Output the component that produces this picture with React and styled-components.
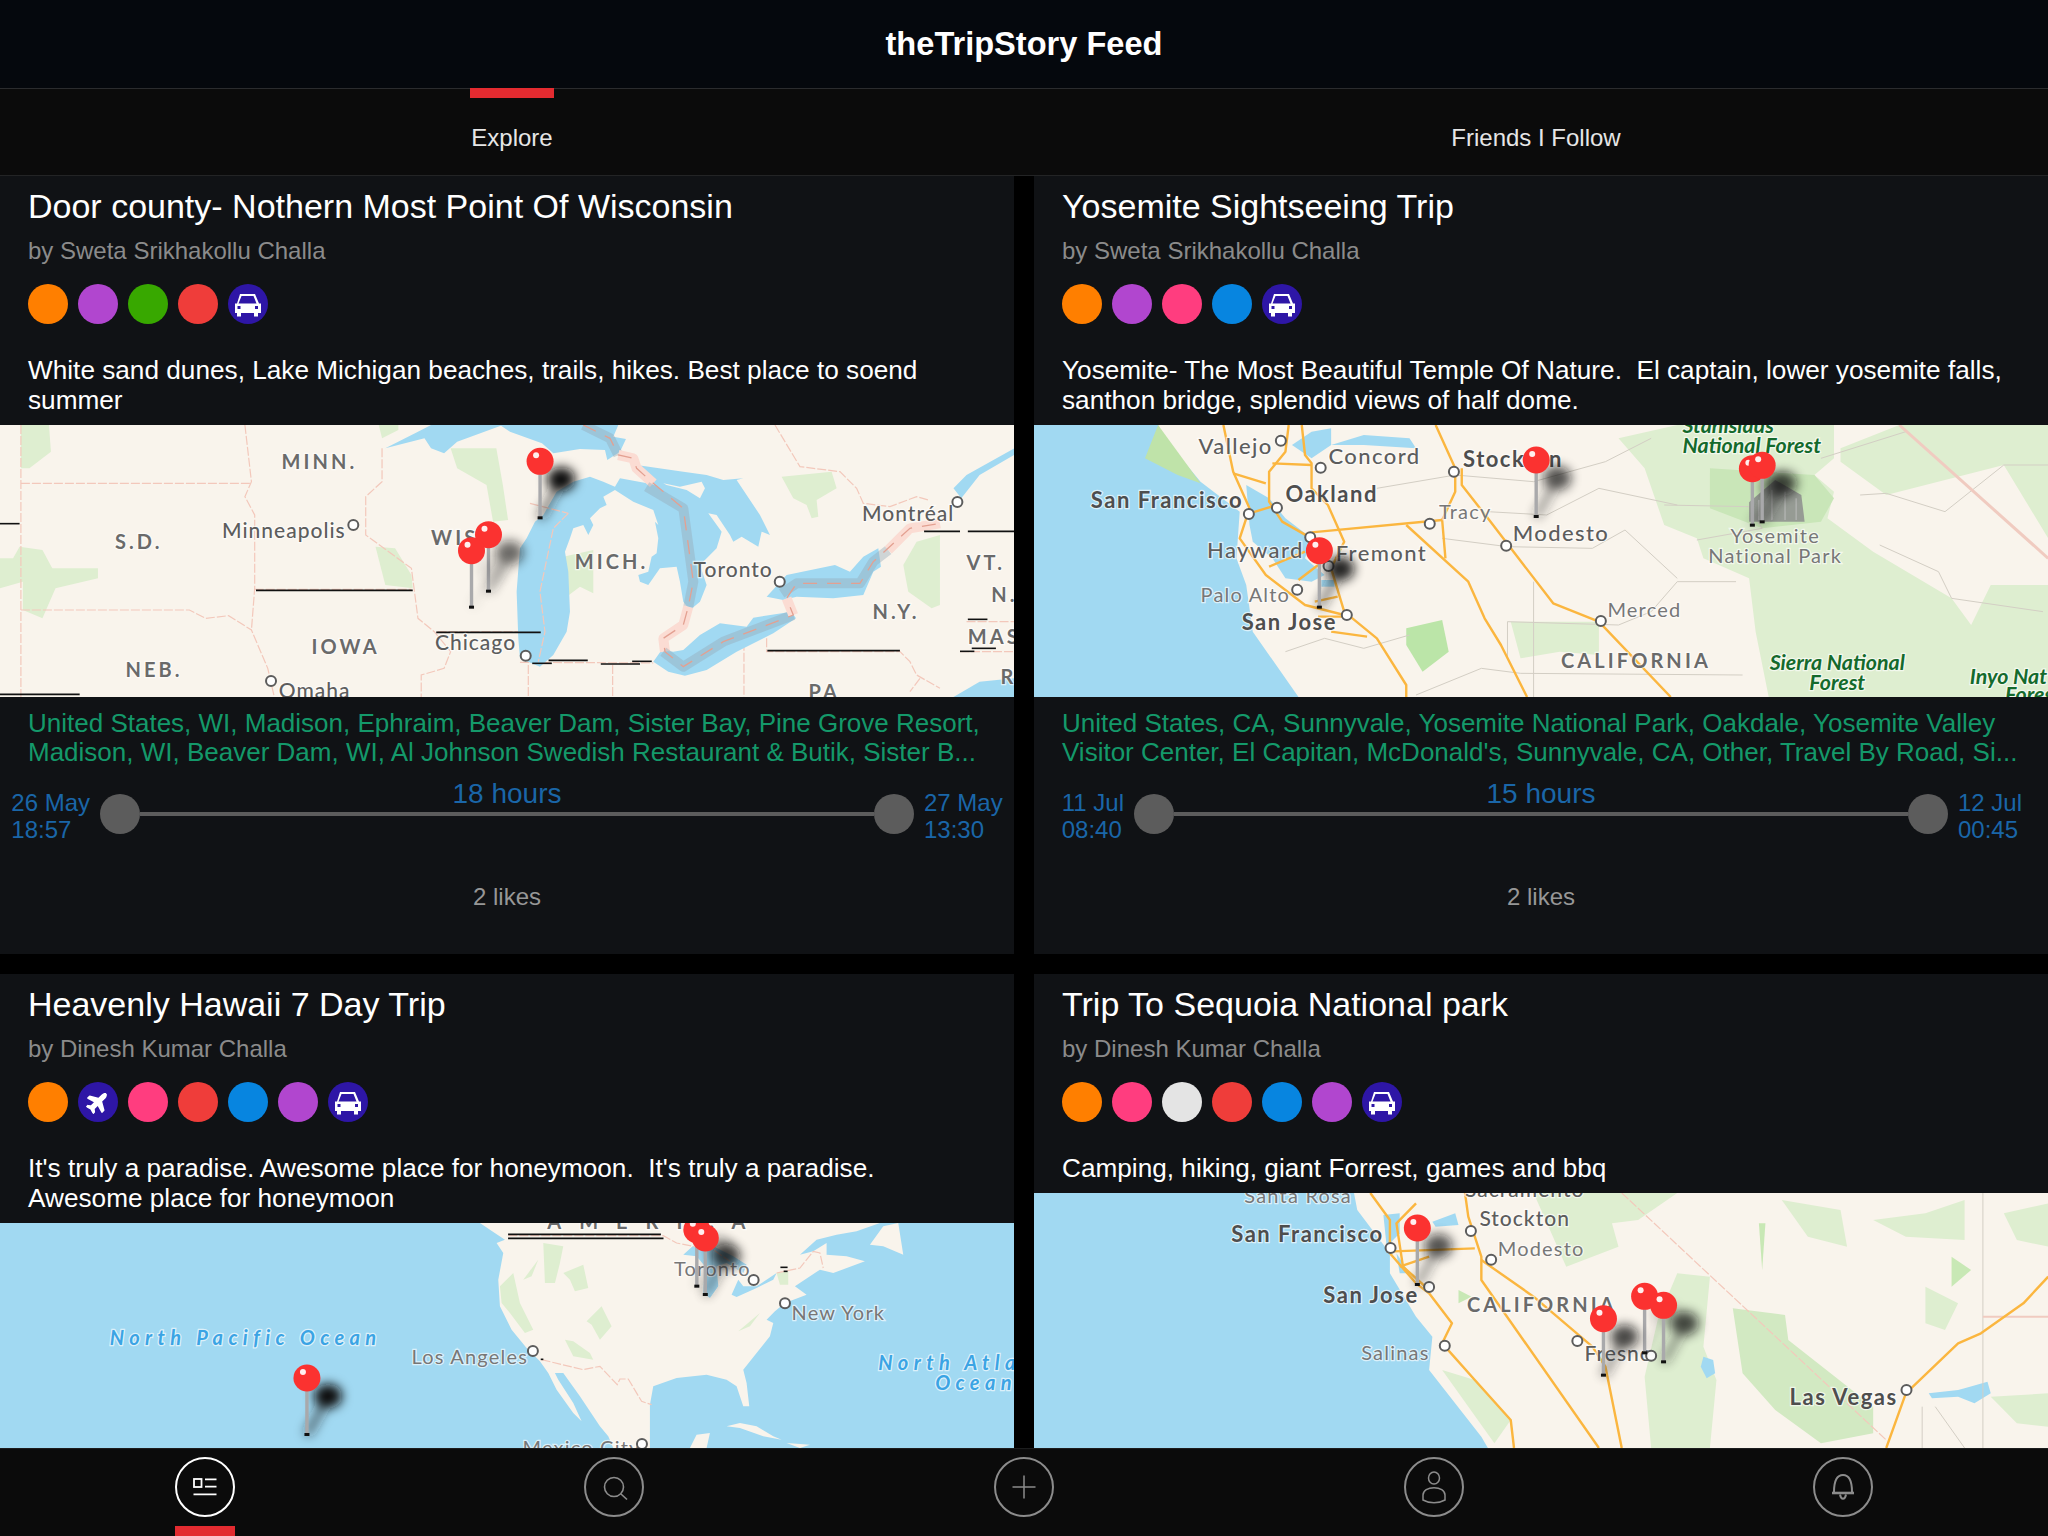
import React from "react";
import styled, { createGlobalStyle } from "styled-components";
import { FaPlane } from "react-icons/fa";

const GlobalStyle = createGlobalStyle`
  html, body { margin: 0; padding: 0; background: #000; }
  body { font-family: "Liberation Sans", Arial, sans-serif; }
`;

const Page = styled.div`
  width: 2048px;
  height: 1536px;
  display: flex;
  flex-direction: column;
  overflow: hidden;
  background: #000;
`;

const Header = styled.header`
  height: 88px;
  box-sizing: content-box;
  flex: none;
  display: flex;
  align-items: center;
  justify-content: center;
  background: #05080d;
  border-bottom: 1px solid #2b2c2e;
  color: #fff;
  font-size: 32.6px;
  font-weight: 700;
  line-height: 90px;
`;

const Tabs = styled.nav`
  height: 86px;
  flex: none;
  display: grid;
  grid-template-columns: 1fr 1fr;
  background: #0b0b0b;
  border-bottom: 1px solid #232425;
`;

const Tab = styled.div`
  position: relative;
  display: flex;
  align-items: center;
  justify-content: center;
  padding-top: 11px;
  color: #e6e6e6;
  font-size: 24px;
  ${(p) =>
    p.$active &&
    `&::before {
      content: "";
      position: absolute;
      top: -1px;
      left: 470px;
      width: 84px;
      height: 10px;
      background: #e32b30;
    }`}
`;

const Feed = styled.main`
  flex: none;
  display: grid;
  grid-template-columns: 1014px 1014px;
  grid-template-rows: 778px 474px;
  column-gap: 20px;
  row-gap: 20px;
`;

const Card = styled.article`
  display: flex;
  flex-direction: column;
  min-height: 0;
  background: #101215;
`;

const Title = styled.h2`
  margin: 10px 28px 0;
  color: #fff;
  font-size: 34px;
  font-weight: 400;
  line-height: 40px;
`;

const Author = styled.div`
  margin: 10px 28px 0;
  color: #8b8b8b;
  font-size: 24px;
  line-height: 30px;
`;

const Tags = styled.div`
  display: flex;
  gap: 10px;
  margin: 18px 28px 0;
`;

const Tag = styled.span`
  width: 40px;
  height: 40px;
  border-radius: 50%;
  display: flex;
  align-items: center;
  justify-content: center;
  color: #fff;
  background: ${(p) => p.$color};
`;

const Description = styled.p`
  margin: 31px 28px 10px;
  color: #fff;
  font-size: 26.2px;
  line-height: 30px;
  white-space: pre-wrap;
`;

const MapFrame = styled.div`
  flex: ${(p) => (p.$fill ? "1" : "none")};
  height: ${(p) => (p.$fill ? "auto" : "272px")};
  min-height: 0;
  overflow: hidden;
  background: #f9f4ec;
`;

const MapSvg = styled.svg`
  display: block;
  width: 100%;
  height: 100%;
`;

const Places = styled.p`
  margin: 12px 28px 0;
  color: #14996a;
  font-size: 26px;
  line-height: 29px;
`;

const Timeline = styled.div`
  display: flex;
  align-items: flex-start;
  margin-top: 13px;
`;

const DateSlot = styled.div`
  width: 90px;
  display: flex;
  justify-content: ${(p) => (p.$end ? "flex-end" : "flex-start")};
  margin-top: 9px;
  color: #1a66a8;
  font-size: 24px;
  line-height: 27px;
`;

const Stop = styled.span`
  width: 40px;
  height: 40px;
  flex: none;
  margin: 14px ${(p) => (p.$right ? "10px" : "0")} 0 ${(p) => (p.$right ? "0" : "10px")};
  border-radius: 50%;
  background: #5c5c5c;
`;

const Track = styled.div`
  flex: 1;
  display: flex;
  flex-direction: column;
  align-items: center;
`;

const Duration = styled.div`
  color: #1a66a8;
  font-size: 28px;
  line-height: 28px;
`;

const TrackLine = styled.div`
  width: 100%;
  height: 4px;
  margin-top: 4px;
  background: #5c5c5c;
`;

const Likes = styled.div`
  margin-top: 39px;
  text-align: center;
  color: #979797;
  font-size: 24px;
  line-height: 30px;
`;

const TabBar = styled.footer`
  height: 88px;
  flex: none;
  display: grid;
  grid-template-columns: repeat(5, 1fr);
  background: #0b0b0b;
  border-top: 1px solid #1c1d1e;
  box-sizing: border-box;
`;

const BarItem = styled.div`
  position: relative;
  display: flex;
  justify-content: center;
  padding-top: 8px;
  ${(p) =>
    p.$active &&
    `&::after {
      content: "";
      position: absolute;
      left: 50%;
      bottom: 0;
      width: 60px;
      height: 10px;
      margin-left: -30px;
      background: #e32b30;
    }`}
`;

const BarCircle = styled.svg`
  width: 60px;
  height: 60px;
  fill: none;
  stroke: ${(p) => (p.$active ? "#fff" : "#8c8c8c")};
`;

/* map drawing parts */
const Water = styled.polygon`
  fill: #a1d9f2;
`;
const Land = styled.polygon`
  fill: #f9f4ec;
`;
const Park = styled.polygon`
  fill: ${(p) => p.$color || "#deeed0"};
`;
const Road = styled.polyline`
  fill: none;
  stroke: #fbb63f;
  stroke-width: 2.4px;
  stroke-linejoin: round;
  vector-effect: non-scaling-stroke;
`;
const Minor = styled.polyline`
  fill: none;
  stroke: #d3cec4;
  stroke-width: 1px;
  vector-effect: non-scaling-stroke;
`;
const Boundary = styled.polyline`
  fill: none;
  stroke: #f3c8bb;
  stroke-width: 1.2px;
  stroke-dasharray: 9 2;
  vector-effect: non-scaling-stroke;
`;
const LakeBand = styled.polyline`
  fill: none;
  stroke: ${(p) => (p.$land ? "#fbdcd3" : "#97a9b8")};
  stroke-opacity: ${(p) => (p.$land ? 1 : 0.42)};
  stroke-width: 10px;
  stroke-linejoin: round;
  vector-effect: non-scaling-stroke;
`;
const BandDash = styled.polyline`
  fill: none;
  stroke: #e3a091;
  stroke-width: 1.3px;
  stroke-dasharray: 14 10;
  vector-effect: non-scaling-stroke;
`;
const Glitch = styled.line`
  stroke: #111;
  stroke-width: 1.6px;
  vector-effect: non-scaling-stroke;
`;
const labelStyles = {
  state: "font-size:20px;font-weight:700;letter-spacing:3.1px;fill:#6a6a6a;",
  region: "font-size:20px;font-weight:700;letter-spacing:18px;fill:#6a6a6a;",
  major: "font-size:22px;font-weight:700;letter-spacing:1.5px;fill:#4e4e4e;",
  large: "font-size:22px;font-weight:500;letter-spacing:1.4px;fill:#5d5d5d;",
  city: "font-size:21px;font-weight:500;letter-spacing:1px;fill:#5d5d5d;",
  minor: "font-size:20px;font-weight:400;letter-spacing:1.2px;fill:#777;",
  forest: "font-size:21.4px;font-weight:700;font-style:italic;fill:#146a2c;",
  ocean: "font-size:20px;font-weight:700;font-style:italic;letter-spacing:5.4px;fill:#3ba4e4;",
};
const Label = styled.text`
  font-family: Lato, "Liberation Sans", sans-serif;
  paint-order: stroke;
  stroke: rgba(255, 255, 255, 0.65);
  stroke-width: 2.5px;
  ${(p) => labelStyles[p.$kind]}
`;
const CityDot = styled.circle`
  fill: #fff;
  stroke: #5c5c5c;
  stroke-width: 2px;
`;
const Needle = styled.rect`
  fill: #a9a9ab;
`;
const PinHead = styled.circle`
  fill: #fb3230;
`;
const PinShine = styled.circle`
  fill: #fff;
  opacity: 0.92;
`;

const Car = () => (
  <svg width="40" height="40" viewBox="0 0 40 40" fill="currentColor">
    <path
      fillRule="evenodd"
      d="M12 10h15l4 9.5h2V29h-3v3.5h-4V29H13v3.5H9V29H7v-9.5h2zm1.5 2l-3 7.5h18l-3-7.5zM9.5 22v3h3v-3zm17.500 0v3h3v-3z"
    />
  </svg>
);

const Plane = () => <FaPlane size={24} style={{ transform: "rotate(-45deg)" }} />;

const Pin = ({ x, y, blur, strength = 0.9 }) => (
  <g>
    <g filter={`url(#${blur})`} opacity={strength}>
      <line x1={x} y1={y} x2={x + 20} y2={y - 36} stroke="#222" strokeWidth="8" opacity="0.6" />
      <ellipse cx={x + 21} cy={y - 39} rx="14" ry="12" fill="#111" />
    </g>
    <Needle x={x - 1.7} y={y - 46} width="3.4" height="45" />
    <rect x={x - 2.5} y={y - 2} width="5" height="3" fill="#111" />
    <PinHead cx={x} cy={y - 57} r="13.5" />
    <PinShine cx={x - 4} cy={y - 63} r="3" />
  </g>
);

/* Shapes and labels are traced in crop coordinates, sx/sy take them to map pixels */
const TraceMap = ({ id, fill, sx, sy, ox = 0, oy = 0, shapes, labels, dots, pins }) => {
  const tx = (x) => (x - ox) * sx;
  const ty = (y) => (y - oy) * sy;
  return (
    <MapFrame $fill={fill}>
      <MapSvg>
        <defs>
          <filter id={id} x="-100%" y="-100%" width="300%" height="300%">
            <feGaussianBlur stdDeviation="5.500" />
          </filter>
        </defs>
        <g transform={`scale(${sx} ${sy}) translate(${-ox} ${-oy})`}>{shapes}</g>
        {labels.map(([text, x, y, kind, anchor]) => (
          <Label key={text + x} x={tx(x)} y={ty(y)} $kind={kind} textAnchor={anchor || "start"}>
            {text}
          </Label>
        ))}
        {dots.map(([x, y]) => (
          <CityDot key={`${x}-${y}`} cx={tx(x)} cy={ty(y)} r={5} />
        ))}
        {pins.map(([x, y, strength]) => (
          <Pin key={`${x}-${y}`} x={tx(x)} y={ty(y)} blur={id} strength={strength} />
        ))}
      </MapSvg>
    </MapFrame>
  );
};

const SX = 1024 / 1568;
const SY = 1 / 3;

const lakesShapes = (
  <>
    <Park points="32,0 75,0 78,80 45,130 32,130" />
    <Park points="580,0 610,0 610,15 585,40" />
    <Park points="690,70 760,70 770,180 778,285 755,290 745,180 700,130" />
    <Park points="575,365 605,370 630,450 632,490 590,480" />
    <Park points="0,400 20,400 30,365 65,375 80,430 150,430 150,460 85,490 65,580 35,555 35,470 0,490" />
    <Boundary points="32,0 32,816" />
    <Boundary points="375,0 385,170 375,215 390,270 390,490 385,615" />
    <Boundary points="32,175 385,175" />
    <Boundary points="32,555 290,555 315,580 350,572 385,615 410,730 420,816" />
    <Boundary points="390,493 630,493" />
    <Boundary points="585,70 585,170 560,215 560,330 630,430 640,580 665,620 690,680 680,730 645,750 645,816" />
    <Boundary points="670,620 830,620" />
    <Boundary points="1480,590 1553,590" />
    <Boundary points="1470,680 1553,680" />
    <Water points="590,70 640,20 660,0 770,0 700,50 680,85 660,70 650,40" />
    <Water points="1460,190 1480,150 1553,70 1553,90 1500,150 1472,220" />
    <Water points="1460,816 1500,770 1553,760 1553,816" />
    {/* lakes region, traced from a true 3x crop starting at x=520 */}
    <g transform="translate(796.2 0) scale(0.5104 1)">
      <Park points="785,155 935,140 950,190 890,225 895,275 875,280 860,240 820,220" />
      <Park points="130,395 220,375 220,505 180,485 140,515" />
      <Park points="1260,330 1190,350 1150,420 1165,500 1235,550 1260,540" />
      <Boundary points="765,0 840,125 960,140 1010,190 1030,235 1110,245 1190,215 1225,225" />
      <Boundary points="740,640 740,680 1140,680 1170,710 1190,750 1260,790" />
      <Boundary points="672,650 672,816" />
      <Boundary points="278,720 278,816" />
      <Boundary points="25,720 25,816" />
      <Boundary points="1200,760 1170,800" />
      <Boundary points="0,712 400,714" />
      <Water points="-60,0 295,0 280,35 318,42 300,80 262,105 255,75 180,72 100,85 66,55 -30,20" />
      <Water points="35,715 60,725 100,690 140,620 150,560 145,440 135,380 150,340 160,310 190,300 205,330 220,300 210,280 240,250 260,240 250,215 285,195 340,230 400,255 415,300 405,290 415,340 410,385 395,395 385,440 355,450 360,470 385,480 420,430 470,425 480,470 490,530 510,555 540,530 560,480 540,420 590,370 605,320 565,265 590,270 630,330 640,350 665,335 715,365 725,320 750,330 720,270 680,210 650,165 670,160 610,165 560,150 490,140 350,120 335,100 350,130 370,165 410,180 300,160 285,185 250,170 210,155 160,170 110,200 70,270 45,290 20,340 0,370 -10,500 -5,640 0,700" />
      <Land points="430,175 480,185 545,170 555,190 540,220 500,195 440,180" />
      <Water points="400,710 425,675 460,680 490,675 540,630 600,595 680,605 700,578 815,560 828,580 760,625 650,680 560,735 495,752 445,740" />
      <Water points="740,515 800,450 945,420 990,440 1030,395 1075,370 1083,425 1060,440 1030,510 940,520 830,515 790,525" />
      <LakeBand points="190,0 270,40 295,90" />
      <LakeBand $land points="295,90 340,100 350,130 400,175" />
      <LakeBand points="380,185 490,250 520,470 505,545" />
      <LakeBand $land points="505,545 490,600 430,640 435,680" />
      <LakeBand points="430,680 490,725 610,650 820,570" />
      <LakeBand $land points="820,570 800,520" />
      <LakeBand points="785,505 830,475 1020,475 1060,410 1105,375" />
      <LakeBand $land points="1105,375 1170,310 1260,295" />
      <BandDash points="190,0 270,40 295,90 340,100 350,130 400,175 490,250 520,470 505,545 490,600 430,640 435,680 490,725 610,650 820,570 800,520 830,475 1020,475 1060,410 1170,310 1260,295" />
      <Boundary points="145,265 100,310 60,500 75,620 55,710" />
      <Boundary points="30,235 145,265" />
    </g>
    <Glitch x1="0" y1="296" x2="30" y2="296" />
    <Glitch x1="392" y1="496" x2="632" y2="496" />
    <Glitch x1="668" y1="622" x2="828" y2="622" />
    <Glitch x1="840" y1="706" x2="900" y2="706" />
    <Glitch x1="815" y1="715" x2="845" y2="715" />
    <Glitch x1="920" y1="717" x2="980" y2="717" />
    <Glitch x1="968" y1="709" x2="998" y2="709" />
    <Glitch x1="1175" y1="677" x2="1378" y2="677" />
    <Glitch x1="1415" y1="319" x2="1470" y2="319" />
    <Glitch x1="1482" y1="319" x2="1553" y2="319" />
    <Glitch x1="1482" y1="583" x2="1512" y2="583" />
    <Glitch x1="1488" y1="670" x2="1525" y2="670" />
    <Glitch x1="1470" y1="679" x2="1492" y2="679" />
    <Glitch x1="0" y1="808" x2="122" y2="808" />
  </>
);

const lakesLabels = [
  ["MINN.", 431, 133, "state"],
  ["S.D.", 176, 372, "state"],
  ["WIS", 660, 360, "state"],
  ["MICH.", 880, 432, "state"],
  ["IOWA", 477, 688, "state"],
  ["NEB.", 192, 756, "state"],
  ["N.Y.", 1336, 582, "state"],
  ["VT.", 1480, 436, "state"],
  ["N.", 1518, 530, "state"],
  ["MAS", 1482, 656, "state"],
  ["R", 1532, 778, "state"],
  ["PA", 1238, 822, "state"],
  ["Minneapolis", 340, 340, "city"],
  ["Montréal", 1320, 287, "city"],
  ["Toronto", 1062, 455, "city"],
  ["Chicago", 666, 676, "city"],
  ["Omaha", 427, 818, "city"],
];

const bayShapes = (
  <>
    <Park points="910,40 1000,0 1240,0 1240,100 1210,150 1240,200 1230,280 1300,380 1420,520 1450,600 1480,480 1568,480 1568,816 1140,816 1120,620 1110,460 1040,400 1030,340 980,300 950,130" />
    <Park $color="#c9e6b8" points="1050,130 1210,150 1240,220 1220,290 1130,310 1050,250" />
    <Park points="1250,70 1340,0 1568,0 1568,340 1500,120 1320,210 1250,110" />
    <Park points="745,590 880,590 880,690 820,680 760,700" />
    <Park $color="#bbe5a8" points="585,610 640,585 650,680 610,740 585,660" />
    <Water points="15,0 205,0 215,40 270,170 330,260 325,400 340,480 350,620 420,816 15,816" />
    <Park $color="#bfe3a9" points="205,0 270,175 235,150 185,100" />
    <Water points="340,180 375,220 400,280 440,340 430,400 460,450 440,470 400,460 380,400 350,350 345,300" />
    <Water points="410,60 440,20 470,10 470,60 440,100" />
    <Water points="470,60 520,30 590,40 600,70 520,60" />
    <Water points="455,465 475,465 475,485 455,485" />
    <Minor points="540,190 660,150 780,170 890,110 960,40" />
    <Minor points="640,340 740,365 870,370 920,315 1000,460" />
    <Minor points="710,260 800,270 880,190 1000,240" />
    <Minor points="600,810 700,730 760,745 1100,750" />
    <Minor points="400,680 460,640 520,670 590,630" />
    <Minor points="980,240 1110,245 1130,310 1030,345" />
    <Minor points="1280,210 1320,205 1410,260 1500,120 1568,120" />
    <Minor points="1310,360 1400,440 1420,520 1560,560" />
    <Minor points="1220,100 1350,20" />
    <Minor points="1090,470 1000,470 960,560 910,600 740,590 740,700" />
    <Minor points="780,470 780,816" />
    <polyline points="1340,0 1568,400" fill="none" stroke="#f0cbc0" strokeWidth="3" vectorEffect="non-scaling-stroke" />
    <Road points="305,0 320,140 345,250 330,340 370,450 430,540 490,570" />
    <Road points="405,0 400,80 375,140 375,230 395,290 440,340 470,430 490,560 540,640 585,780 585,816" />
    <Road points="425,0 430,90 440,115 440,190 465,240 490,350 470,430" />
    <Road points="320,145 370,175" />
    <Road points="345,265 387,240" />
    <Road points="440,322 640,285" />
    <Road points="585,300 680,470 705,580 730,660 770,816" />
    <Road points="630,0 660,130 660,200 640,285 645,400" />
    <Road points="670,130 670,180 710,280 810,535 880,590 990,816" />
    <Road points="375,425 430,380" />
    <Road points="420,465 450,420" />
    <Road points="445,530 480,515" />
    <Road points="450,575 500,575" />
    <Road points="470,620 525,635" />
    <Road points="380,115 440,120" />
    <path d="M1110,290 L1110,232 L1150,165 L1190,210 L1195,290 Z" fill="#8d8d8d" opacity="0.85" />
    <path d="M1125,285 V225 M1145,285 V195 M1165,285 V200 M1182,285 V220" stroke="#bdbdbd" strokeWidth="1" vectorEffect="non-scaling-stroke" />
  </>
);

const bayLabels = [
  ["Vallejo", 267, 88, "large"],
  ["Concord", 466, 116, "large"],
  ["Stockton", 672, 125, "major"],
  ["San Francisco", 102, 250, "major"],
  ["Oakland", 400, 232, "major"],
  ["Tracy", 635, 282, "minor"],
  ["Modesto", 748, 348, "large"],
  ["Hayward", 280, 398, "large"],
  ["Fremont", 477, 408, "large"],
  ["Palo Alto", 270, 532, "minor"],
  ["San Jose", 333, 616, "major"],
  ["Merced", 893, 575, "minor"],
  ["CALIFORNIA", 822, 728, "state"],
  ["Yosemite", 1150, 355, "minor", "middle"],
  ["National Park", 1150, 413, "minor", "middle"],
  ["Stanislaus", 1008, 25, "forest"],
  ["National Forest", 1008, 85, "forest"],
  ["Sierra National", 1245, 735, "forest", "middle"],
  ["Forest", 1245, 795, "forest", "middle"],
  ["Inyo Nat", 1448, 778, "forest"],
  ["Forest", 1502, 832, "forest"],
];

const usaShapes = (
  <>
    <rect x="0" y="39" width="1568" height="680" fill="#a1d9f2" />
    {/* continent, traced from a true 3x crop starting at x=480 */}
    <g transform="translate(734.900 39) scale(0.5104 1)">
      <Land points="0,0 30,20 75,50 50,60 70,90 55,170 60,250 95,320 140,375 180,415 205,450 250,450 300,520 360,610 385,640 400,675 510,675 510,590 510,545 520,490 590,465 680,455 740,470 770,490 790,550 808,550 800,480 790,440 830,390 870,340 880,300 860,290 885,265 915,240 980,215 945,190 1020,140 1060,150 1155,115 1100,100 1040,95 1040,60 1000,85 960,95 1010,50 1070,35 1130,25 1200,0" />
      <Land points="215,430 235,470 280,540 305,595 280,570 230,500 205,450" />
      <Land points="1170,65 1210,10 1255,0 1270,95 1210,70" />
      <Land points="740,610 780,600 830,610 880,640 905,650 850,640 780,615" />
      <Land points="630,675 650,635 690,630 680,675" />
      <Land points="920,660 990,665 960,675" />
      <Water points="610,95 640,68 700,70 760,100 800,125 790,150 740,120 710,130 715,190 690,225 670,210 675,130 650,100" />
      <Water points="755,215 775,170 790,190 830,190 890,150 880,170 830,195 770,222" />
      <Park points="190,60 250,70 240,120 225,180 195,180" />
      <Park points="130,170 175,110 155,160" />
      <Park points="250,150 310,125 325,195 285,205 270,170" />
      <Park points="320,295 365,250 395,310 360,350 335,305" />
      <Park points="255,350 280,355 330,390 340,410 280,400" />
      <Park points="60,190 100,150 120,240 160,320 135,330 90,270 65,240" />
      <Park points="775,325 840,270 810,310" />
      <Park points="890,150 925,145 925,185 900,185" />
      <Boundary points="185,410 310,440 360,430 412,485 420,468 445,468 485,535 515,545" />
      <Boundary points="890,150 960,135 1000,85 1020,90 1030,135" />
      <Boundary points="85,38 550,38 590,60 640,70 700,80 750,115" />
    </g>
    <Glitch x1="778" y1="73" x2="1012" y2="73" />
    <Glitch x1="778" y1="85" x2="1016" y2="85" />
    <Glitch x1="1195" y1="172" x2="1206" y2="172" />
    <Glitch x1="1200" y1="184" x2="1206" y2="184" />
    <Glitch x1="828" y1="448" x2="832" y2="448" />
  </>
);

const usaLabels = [
  ["AMERICA", 838, 57, "region"],
  ["North Pacific Ocean", 168, 405, "ocean"],
  ["North Atla", 1345, 480, "ocean"],
  ["Ocean", 1432, 540, "ocean"],
  ["Los Angeles", 630, 462, "minor"],
  ["Toronto", 1032, 197, "minor"],
  ["New York", 1212, 330, "minor"],
  ["Mexico City", 800, 735, "minor"],
];

const sierraShapes = (
  <>
    <Park points="780,39 1000,39 940,120 900,130 910,200 830,260" />
    <Park points="1000,280 1050,290 1040,500 1060,600 1050,804 960,804 950,590 970,420" />
    <Park $color="#d2e9c2" points="1085,385 1165,405 1170,480 1300,680 1300,760 1220,790 1150,690 1100,580" />
    <Park points="640,570 690,600 745,720 720,790" />
    <Park points="1160,60 1250,90 1260,200 1200,170" />
    <Park points="1380,320 1430,370 1410,450 1380,430" />
    <Park points="1480,650 1568,640 1568,740 1520,730" />
    <Park $color="#c8e8b5" points="1420,230 1450,270 1420,320" />
    <Park $color="#c8e8b5" points="1125,130 1135,130 1130,270" />
    <Park $color="#c8e8b5" points="665,330 685,350 665,370" />
    <Park points="1300,120 1380,100 1440,60 1440,180 1350,170" />
    <Park points="1500,100 1568,70 1568,200 1520,180" />
    <Water points="15,39 505,39 510,90 560,220 560,280 600,410 625,470 620,570 700,770 710,804 15,804" />
    <Water points="550,105 575,100 575,160 555,200" />
    <Water points="625,125 660,100 665,135 630,140" />
    <Water points="570,220 590,280 575,280" />
    <Water points="1040,530 1055,540 1058,580 1045,595 1036,560" />
    <Water points="1385,640 1430,630 1440,625 1475,605 1480,640 1455,670 1430,650 1390,655" />
    <Boundary points="915,39 1320,780" />
    <Minor points="1468,39 1468,804" />
    <Minor points="1375,680 1375,804" />
    <Minor points="1395,680 1440,804" />
    <polyline points="1468,410 1568,410" fill="none" stroke="#f0cbc0" strokeWidth="2" vectorEffect="non-scaling-stroke" />
    <Road points="530,39 560,120 560,220 600,310 620,340" />
    <Road points="600,70 570,130 580,260 620,330" />
    <Road points="675,39 680,110 700,230 700,300 880,804" />
    <Road points="700,240 780,350 870,500 890,560 915,804" />
    <Road points="620,340 655,430 640,490 690,600 745,720 750,804" />
    <Road points="1320,804 1350,640 1430,490 1465,460 1530,370 1568,290" />
    <Road points="555,215 690,205" />
    <Road points="575,260 620,230" />
  </>
);

const sierraLabels = [
  ["Santa Rosa", 337, 68, "minor"],
  ["Sacramento", 675, 52, "city"],
  ["Stockton", 697, 138, "city"],
  ["San Francisco", 317, 187, "major"],
  ["Modesto", 725, 228, "minor"],
  ["San Jose", 458, 368, "major"],
  ["CALIFORNIA", 678, 395, "state"],
  ["Salinas", 516, 540, "minor"],
  ["Fresno", 858, 543, "city"],
  ["Las Vegas", 1172, 675, "major"],
];

const maps = {
  lakes: {
    sx: SX, sy: SY, shapes: lakesShapes, labels: lakesLabels,
    dots: [[541, 300], [1466, 231], [1194, 470], [805, 692], [415, 768]],
    pins: [[827, 280, 1], [748, 500, 0.6], [722, 548, 0.12]],
  },
  bay: {
    sx: SX, sy: SY, ox: 15, shapes: bayShapes, labels: bayLabels,
    dots: [[393, 47], [454, 128], [658, 140], [344, 267], [387, 248], [621, 296], [738, 362], [438, 337], [466, 423], [418, 494], [494, 570], [883, 588]],
    pins: [[784, 276, 0.7], [452, 548, 0.9], [1115, 302, 0.4], [1130, 292, 0.7]],
  },
  usa: {
    sx: SX, sy: SY, oy: 39, fill: true, shapes: usaShapes, labels: usaLabels,
    dots: [[816, 423], [1154, 210], [1202, 280], [983, 702]],
    pins: [[1067, 230, 0.3], [1080, 255, 0.8], [470, 675, 1]],
  },
  sierra: {
    sx: SX, sy: SY, ox: 15, oy: 39, fill: true, shapes: sierraShapes, labels: sierraLabels,
    dots: [[561, 204], [684, 153], [715, 239], [620, 321], [644, 497], [847, 483], [960, 527], [1351, 630]],
    pins: [[602, 315, 0.7], [950, 520, 0.2], [979, 547, 0.75], [887, 587, 0.75]],
  },
};

const C = {
  orange: "#ff7f00",
  purple: "#b146cf",
  green: "#38a800",
  red: "#ef3d3a",
  blue: "#0785e0",
  pink: "#ff3d7f",
  grey: "#e4e4e4",
  navy: "#2e16a6",
};

const trips = [
  {
    map: "lakes",
    title: "Door county- Nothern Most Point Of Wisconsin",
    author: "by Sweta Srikhakollu Challa",
    tags: [C.orange, C.purple, C.green, C.red, "car"],
    text: "White sand dunes, Lake Michigan beaches, trails, hikes. Best place to soend summer",
    places: "United States, WI, Madison, Ephraim, Beaver Dam, Sister Bay, Pine Grove Resort, Madison, WI, Beaver Dam, WI, Al Johnson Swedish Restaurant & Butik, Sister B...",
    from: ["26 May", "18:57"],
    to: ["27 May", "13:30"],
    hours: "18 hours",
    likes: "2 likes",
  },
  {
    map: "bay",
    title: "Yosemite Sightseeing Trip",
    author: "by Sweta Srikhakollu Challa",
    tags: [C.orange, C.purple, C.pink, C.blue, "car"],
    text: "Yosemite- The Most Beautiful Temple Of Nature.  El captain, lower yosemite falls, santhon bridge, splendid views of half dome.",
    places: "United States, CA, Sunnyvale, Yosemite National Park, Oakdale, Yosemite Valley Visitor Center, El Capitan, McDonald's, Sunnyvale, CA, Other, Travel By Road, Si...",
    from: ["11 Jul", "08:40"],
    to: ["12 Jul", "00:45"],
    hours: "15 hours",
    likes: "2 likes",
  },
  {
    map: "usa",
    title: "Heavenly Hawaii 7 Day Trip",
    author: "by Dinesh Kumar Challa",
    tags: [C.orange, "plane", C.pink, C.red, C.blue, C.purple, "car"],
    text: "It's truly a paradise. Awesome place for honeymoon.  It's truly a paradise. Awesome place for honeymoon",
  },
  {
    map: "sierra",
    title: "Trip To Sequoia National park",
    author: "by Dinesh Kumar Challa",
    tags: [C.orange, C.pink, C.grey, C.red, C.blue, C.purple, "car"],
    text: "Camping, hiking, giant Forrest, games and bbq",
  },
];

const DateText = ({ lines }) => (
  <div>
    {lines[0]}
    <br />
    {lines[1]}
  </div>
);

const TripCard = ({ trip }) => (
  <Card>
    <Title>{trip.title}</Title>
    <Author>{trip.author}</Author>
    <Tags>
      {trip.tags.map((tag, i) =>
        tag === "car" || tag === "plane" ? (
          <Tag key={i} $color={C.navy}>{tag === "car" ? <Car /> : <Plane />}</Tag>
        ) : (
          <Tag key={i} $color={tag} />
        )
      )}
    </Tags>
    <Description>{trip.text}</Description>
    <TraceMap id={`blur-${trip.map}`} {...maps[trip.map]} />
    {trip.places && (
      <>
        <Places>{trip.places}</Places>
        <Timeline>
          <DateSlot $end><DateText lines={trip.from} /></DateSlot>
          <Stop />
          <Track>
            <Duration>{trip.hours}</Duration>
            <TrackLine />
          </Track>
          <Stop $right />
          <DateSlot><DateText lines={trip.to} /></DateSlot>
        </Timeline>
        <Likes>{trip.likes}</Likes>
      </>
    )}
  </Card>
);

const FeedIcon = () => (
  <g strokeWidth="1.8">
    <rect x="-11" y="-8" width="7.5" height="8" />
    <path d="M0 -7.700H11.500M0 -0.300H11.500M-11.500 7.300H11.500" />
  </g>
);
const SearchIcon = () => (
  <g strokeWidth="1.6">
    <circle cx="0" cy="0" r="9.500" />
    <path d="M7 7L13 12.500" />
  </g>
);
const PlusIcon = () => <path strokeWidth="1.5" d="M-11.500 0H11.500M0 -11.500V11.500" />;
const UserIcon = () => (
  <g strokeWidth="1.5">
    <ellipse cx="0" cy="-9" rx="5.500" ry="6" />
    <path d="M-11 13V8C-11 3.500 -6 0.700 0 0.700S11 3.500 11 8V13C5 16.500 -5 16.500 -11 13Z" />
  </g>
);
const BellIcon = () => (
  <g strokeWidth="2">
    <path d="M-9 5C-9 -3 -7 -12 0 -12S9 -3 9 5" />
    <path d="M-11 6H11" strokeWidth="2.600" />
    <path d="M-3 7.500C-2 13 2 13 3 7.500" />
  </g>
);

const barItems = [
  [FeedIcon, true],
  [SearchIcon, false],
  [PlusIcon, false],
  [UserIcon, false],
  [BellIcon, false],
];

export default function App() {
  return (
    <Page>
      <GlobalStyle />
      <Header>theTripStory Feed</Header>
      <Tabs>
        <Tab $active>Explore</Tab>
        <Tab>Friends I Follow</Tab>
      </Tabs>
      <Feed>
        {trips.map((trip) => (
          <TripCard key={trip.map} trip={trip} />
        ))}
      </Feed>
      <TabBar>
        {barItems.map(([Icon, active], i) => (
          <BarItem key={i} $active={active}>
            <BarCircle $active={active} viewBox="-30 -30 60 60">
              <circle r="29" strokeWidth="2" />
              <Icon />
            </BarCircle>
          </BarItem>
        ))}
      </TabBar>
    </Page>
  );
}
